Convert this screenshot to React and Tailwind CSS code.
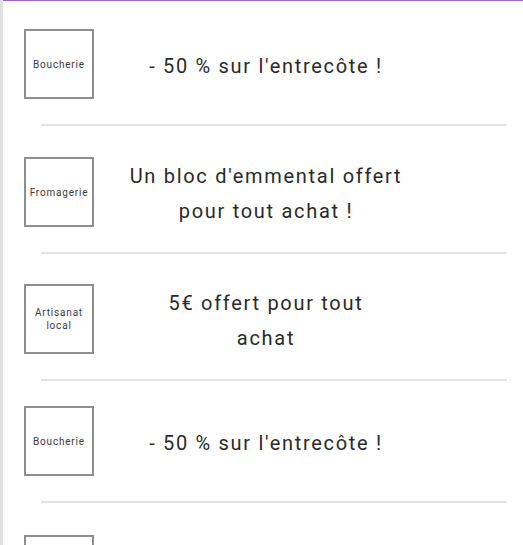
import React from 'react';

const offers = [
  { label: ['Boucherie'], text: ["- 50 % sur l'entrecôte !"], pt: 'pt-[28px]' },
  { label: ['Fromagerie'], text: ["Un bloc d'emmental offert", 'pour tout achat !'], pt: 'pt-[31px]' },
  { label: ['Artisanat', 'local'], text: ['5€ offert pour tout', 'achat'], pt: 'pt-[30px]' },
  { label: ['Boucherie'], text: ["- 50 % sur l'entrecôte !"], pt: 'pt-[25px]' },
  { label: ['Fromagerie'], text: ['Un fromage offert !'], pt: 'pt-[32px]' },
];

const OfferRow = ({ offer }) => {
  return (
    <div className={offer.pt}>
      <div className="flex items-center pl-[21px]">
        {/* Shop tag */}
        <div className="w-[70px] h-[70px] shrink-0 border-2 border-[#8e8e8e] flex items-center justify-center text-center text-[10px] leading-[13px] tracking-[0.8px] text-[#3a3a3a]">
          <div>
            {offer.label.map((l, i) => (
              <div key={i}>{l}</div>
            ))}
          </div>
        </div>

        {/* Offer text */}
        <div className="flex-1 pr-[85px] pt-[2px] -mb-[2px] text-center text-[20px] leading-[35px] tracking-[1.7px] text-[#2a2a2a]">
          {offer.text.map((t, i) => (
            <div key={i}>{t}</div>
          ))}
        </div>
      </div>
      <div className="mt-[25px] ml-[38px] mr-[16px] h-[2px] bg-[#e3e3e3]" />
    </div>
  );
};

export default function App() {
  return (
    <div className="w-[523px] h-[545px] overflow-hidden bg-white border-l-[3px] border-[#e0e0e0] font-['Roboto',sans-serif]">
      <div className="h-px bg-[#a259f7]" />
      {offers.map((o, i) => (
        <OfferRow key={i} offer={o} />
      ))}
    </div>
  );
}
